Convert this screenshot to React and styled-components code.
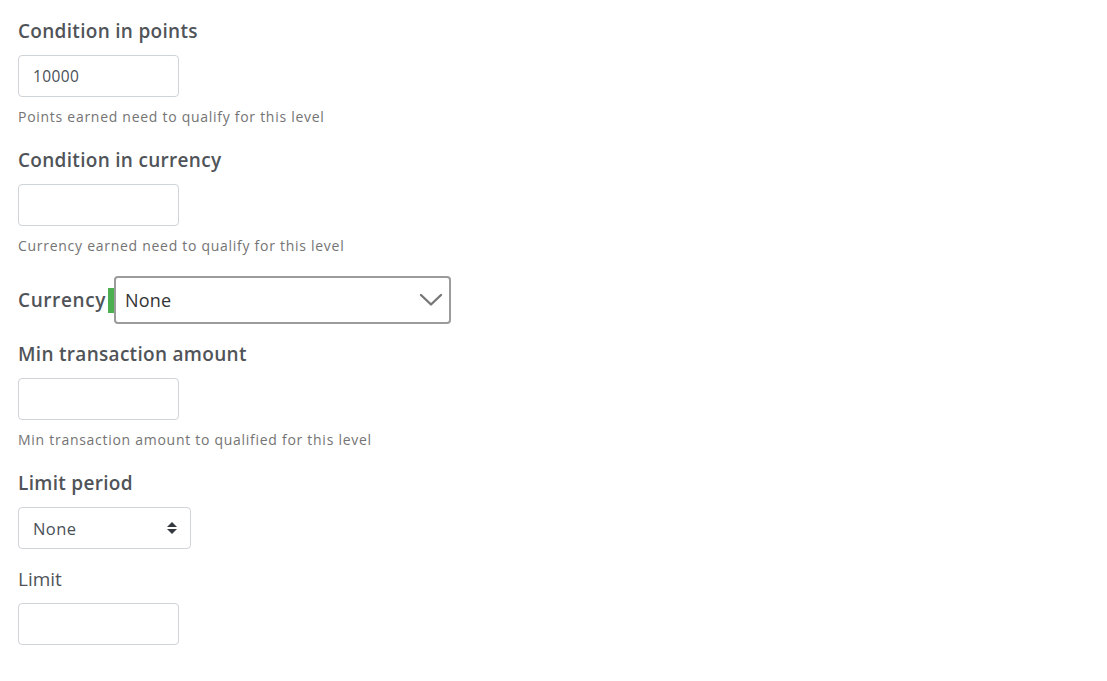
import React from "react";
import styled, { createGlobalStyle } from "styled-components";

const Global = createGlobalStyle`
  html, body {
    margin: 0;
    padding: 0;
    background: #ffffff;
  }
  * { box-sizing: border-box; }
`;

const Page = styled.div`
  padding: 18px 18px 0 18px;
  font-family: "Open Sans", "Liberation Sans", sans-serif;
  color: #4a4f55;
`;

const Field = styled.div`
  display: flex;
  flex-direction: column;
  align-items: flex-start;
  margin-bottom: ${(p) => (p.$help ? "20px" : "17px")};
`;

const Label = styled.label`
  font-size: 19px;
  font-weight: ${(p) => (p.$plain ? 400 : 600)};
  line-height: 27px;
  letter-spacing: ${(p) => (p.$plain ? "0" : "0.3px")};
  color: #505459;
  margin-bottom: 10px;
`;

const TextInput = styled.input`
  width: 161px;
  height: 42px;
  border: 1px solid #ced4da;
  border-radius: 4px;
  padding: 0 14px;
  font-family: inherit;
  font-size: 15.5px;
  letter-spacing: 0.4px;
  color: #495057;
  outline: none;
`;

const Help = styled.div`
  margin-top: 10px;
  font-size: 14px;
  line-height: 20px;
  color: #747474;
  letter-spacing: 0.72px;
`;

const CurrencyRow = styled.div`
  display: flex;
  align-items: center;
  margin-bottom: 17px;
`;

const InlineLabel = styled.span`
  font-size: 19px;
  font-weight: 600;
  letter-spacing: 0.6px;
  color: #505459;
`;

const Marker = styled.span`
  width: 6px;
  height: 25px;
  background: #4caf50;
  margin-left: 2px;
`;

const WideSelect = styled.div`
  display: flex;
  align-items: center;
  justify-content: space-between;
  width: 337px;
  height: 48px;
  border: 2px solid #9b9b9b;
  border-radius: 4px;
  padding: 0 6px 0 9px;
  font-size: 18px;
  letter-spacing: 0.2px;
  color: #333333;
`;

const SmallSelect = styled.div`
  display: flex;
  align-items: center;
  justify-content: space-between;
  width: 173px;
  height: 42px;
  border: 1px solid #ced4da;
  border-radius: 4px;
  padding: 0 13px 0 14px;
  font-size: 16.5px;
  letter-spacing: 0.4px;
  color: #495057;
`;

const Chevron = () => (
  <svg width="24" height="14" viewBox="0 0 24 14" fill="none">
    <path d="M2 2 L12 11.5 L22 2" stroke="#777777" strokeWidth="2.4" strokeLinecap="round" strokeLinejoin="round" />
  </svg>
);

const UpDown = () => (
  <svg width="10" height="14" viewBox="0 0 10 14">
    <path d="M5 1 L10 6 H0 Z" fill="#343a40" />
    <path d="M5 13 L10 8 H0 Z" fill="#343a40" />
  </svg>
);

export default function App() {
  return (
    <>
      <Global />
      <Page>
        <Field $help>
          <Label>Condition in points</Label>
          <TextInput defaultValue="10000" />
          <Help>Points earned need to qualify for this level</Help>
        </Field>

        <Field $help>
          <Label>Condition in currency</Label>
          <TextInput />
          <Help>Currency earned need to qualify for this level</Help>
        </Field>

        <CurrencyRow>
          <InlineLabel>Currency</InlineLabel>
          <Marker />
          <WideSelect>
            <span>None</span>
            <Chevron />
          </WideSelect>
        </CurrencyRow>

        <Field $help>
          <Label>Min transaction amount</Label>
          <TextInput />
          <Help>Min transaction amount to qualified for this level</Help>
        </Field>

        <Field>
          <Label>Limit period</Label>
          <SmallSelect>
            <span>None</span>
            <UpDown />
          </SmallSelect>
        </Field>

        <Field>
          <Label $plain>Limit</Label>
          <TextInput />
        </Field>
      </Page>
    </>
  );
}
